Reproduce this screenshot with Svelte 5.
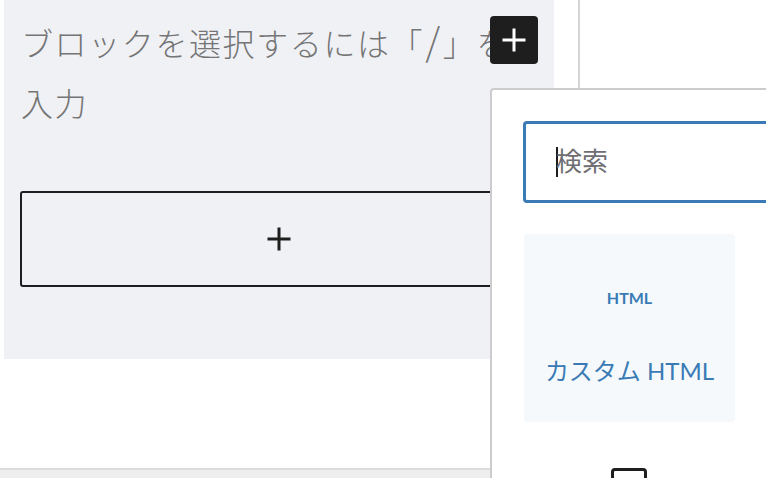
<script>
	const blocks = [{ icon: 'HTML', label: 'カスタム HTML' }];
</script>

<div class="page">
	<main class="canvas">
		<section class="group">
			<p class="placeholder">ブロックを選択するには「<span class="slash">/</span>」を入力</p>
			<button class="appender" aria-label="ブロックを追加">
				<svg viewBox="0 0 24 24" width="24" height="24"><path d="M13.5.5h-3v10h-10v3h10v10h3v-10h10v-3h-10z" /></svg>
			</button>
		</section>
		<div class="divider"></div>
	</main>
	<div class="bottom"></div>

	<button class="inserter" aria-label="追加">
		<svg viewBox="0 0 24 24" width="24" height="24"><path d="M13.5.5h-3v10h-10v3h10v10h3v-10h10v-3h-10z" /></svg>
	</button>

	<div class="popover">
		<div class="search">
			<span class="caret"></span>
			<span class="hint">検索</span>
		</div>
		{#each blocks as b}
			<div class="block">
				<span class="icon">{b.icon}</span>
				<span class="label">{b.label}</span>
			</div>
		{/each}
		<div class="next-icon"></div>
	</div>
</div>

<style>
	:global(body) {
		margin: 0;
		background: #fff;
	}
	.page {
		position: relative;
		width: 766px;
		height: 478px;
		overflow: hidden;
		display: flex;
		flex-direction: column;
		font-family: "Noto Sans CJK JP", "Lato", sans-serif;
	}
	.canvas {
		flex: 1;
		display: flex;
		padding-left: 4px;
	}
	.group {
		width: 550px;
		height: 359px;
		box-sizing: border-box;
		padding: 12px 0 0 17px;
		background: #f0f1f5;
	}
	.placeholder {
		margin: 0 0 59px;
		width: 496px;
		font-size: 32px;
		font-weight: 300;
		line-height: 60px;
		letter-spacing: 1.6px;
		color: #757575;
	}
	.slash {
		font-size: 38px;
		line-height: 1;
		padding: 0 1px;
	}
	.appender {
		display: flex;
		align-items: center;
		justify-content: center;
		width: 600px;
		height: 96px;
		margin-left: -1px;
		padding: 0;
		background: none;
		border: 2px solid #1e1e1e;
		border-radius: 3px;
	}
	.appender svg {
		fill: #1e1e1e;
		transform: translateX(-41px);
	}
	.divider {
		width: 2px;
		height: 100%;
		margin-left: 24px;
		background: #d4d4d4;
	}
	.bottom {
		height: 8px;
		border-top: 2px solid #dcdcdc;
		background: #eeeeee;
	}
	.inserter {
		position: absolute;
		left: 490px;
		top: 16px;
		width: 48px;
		height: 48px;
		display: flex;
		align-items: center;
		justify-content: center;
		padding: 0;
		border: 0;
		border-radius: 4px;
		background: #1e1e1e;
	}
	.inserter svg {
		fill: #fff;
	}
	.popover {
		position: absolute;
		left: 490px;
		top: 88px;
		width: 320px;
		height: 420px;
		box-sizing: border-box;
		padding: 31px 0 0 31px;
		background: #fff;
		border: 2px solid #cccccc;
		border-radius: 4px;
		display: flex;
		flex-direction: column;
		align-items: flex-start;
	}
	.search {
		width: 320px;
		height: 82px;
		flex: none;
		box-sizing: border-box;
		display: flex;
		align-items: center;
		padding-left: 30px;
		border: 3px solid #3a7bb5;
		border-radius: 4px;
	}
	.caret {
		width: 2px;
		height: 30px;
		background: #1e1e1e;
	}
	.hint {
		margin: -5px 0 0 -2px;
		font-size: 26px;
		color: #6e6e73;
	}
	.block {
		margin: 31px 0 0 1px;
		width: 211px;
		height: 188px;
		flex: none;
		border-radius: 4px;
		background: #f5f9fc;
		color: #3a7bb5;
		display: flex;
		flex-direction: column;
		align-items: center;
	}
	.icon {
		margin-top: 54px;
		font-family: "Lato", sans-serif;
		font-size: 16px;
		font-weight: 700;
		line-height: 20px;
	}
	.label {
		margin-top: 45px;
		font-family: "Lato", "Noto Sans CJK JP", sans-serif;
		font-size: 24px;
		line-height: 36px;
		white-space: nowrap;
	}
	.next-icon {
		margin: 46px 0 0 88px;
		width: 36px;
		height: 36px;
		flex: none;
		box-sizing: border-box;
		border: 3px solid #1e1e1e;
		border-radius: 4px;
	}
</style>
